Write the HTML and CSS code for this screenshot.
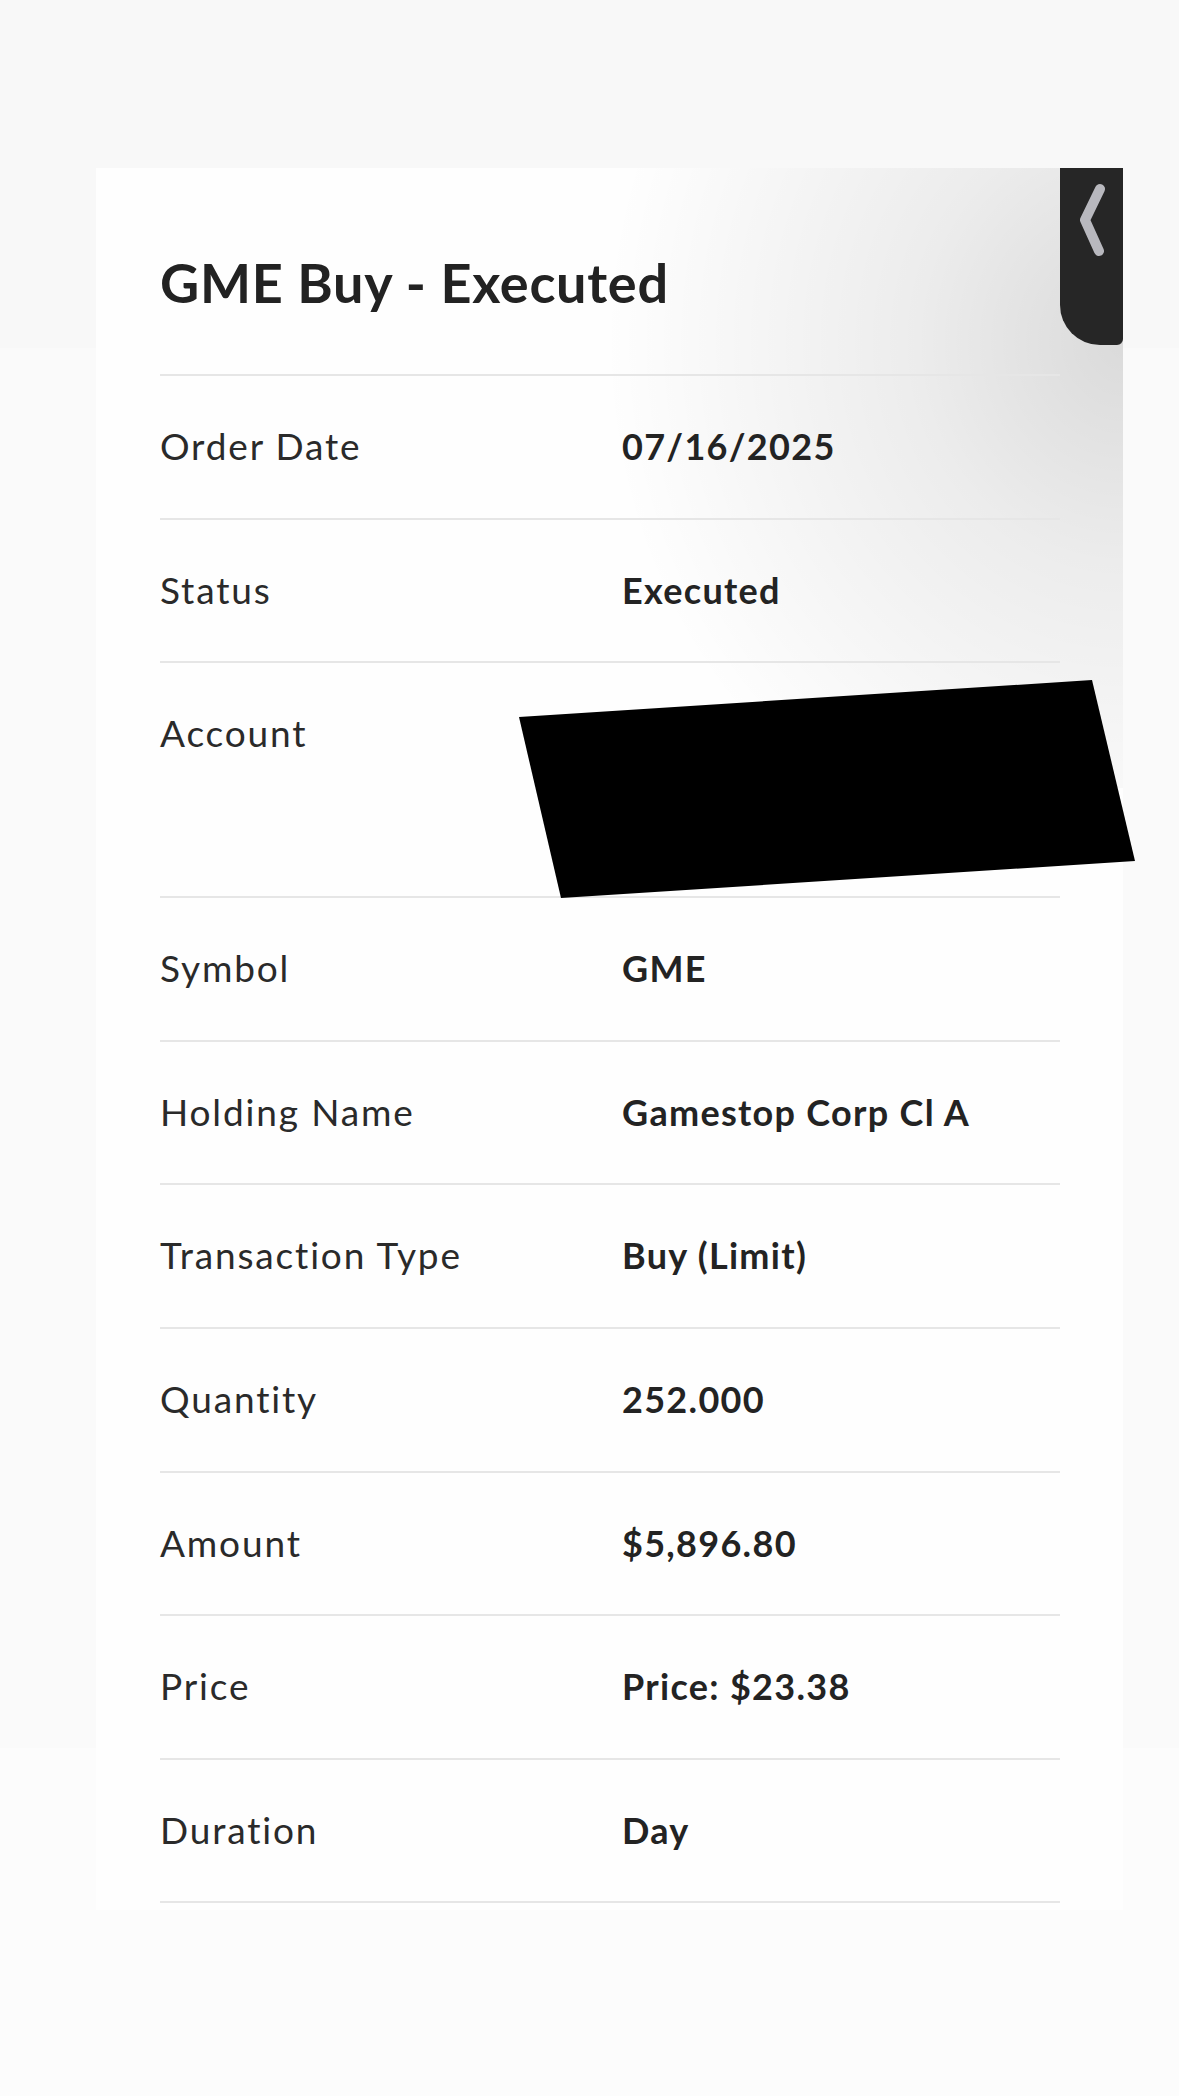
FILE: index.html
```html
<!DOCTYPE html>
<html lang="en">
<head>
<meta charset="utf-8">
<title>GME Buy - Executed</title>
<link rel="stylesheet" href="styles.css">
</head>
<body>
<div class="page">
  <div class="band band-top"></div>
  <div class="band band-mid"></div>
  <section class="card">
    <div class="shade"></div>
    <div class="tab">
      <svg class="chev" width="63" height="177" viewBox="0 0 63 177">
        <polyline points="40,21 25,52 39,83" fill="none" stroke="#b8b8be" stroke-width="10" stroke-linecap="round" stroke-linejoin="round"/>
      </svg>
    </div>
    <h1 class="title">GME Buy - Executed</h1>
    <div class="rows">
      <div class="row"><div class="label">Order Date</div><div class="value">07/16/2025</div></div>
      <div class="row"><div class="label">Status</div><div class="value">Executed</div></div>
      <div class="row row-account"><div class="label">Account</div><div class="value"></div>
        <svg class="redact" width="616" height="218" viewBox="0 0 616 218"><polygon points="0,37 573,0 616,181 42,218" fill="#000"/></svg>
      </div>
      <div class="row"><div class="label">Symbol</div><div class="value">GME</div></div>
      <div class="row"><div class="label">Holding Name</div><div class="value">Gamestop Corp Cl A</div></div>
      <div class="row"><div class="label">Transaction Type</div><div class="value">Buy (Limit)</div></div>
      <div class="row"><div class="label">Quantity</div><div class="value">252.000</div></div>
      <div class="row"><div class="label">Amount</div><div class="value">$5,896.80</div></div>
      <div class="row"><div class="label">Price</div><div class="value">Price: $23.38</div></div>
      <div class="row"><div class="label">Duration</div><div class="value">Day</div></div>
    </div>
  </section>
</div>
</body>
</html>
```
FILE: styles.css
```css
html, body {
  margin: 0;
  padding: 0;
}
body {
  background: #fcfcfc;
  font-family: "Lato", "Liberation Sans", sans-serif;
  color: #252525;
  width: 1179px;
  height: 2096px;
  overflow: hidden;
}
.page {
  position: relative;
  padding-top: 168px;
  height: 2096px;
  box-sizing: border-box;
}
.band {
  position: absolute;
  left: 0;
  right: 0;
  z-index: 0;
}
.band-top {
  top: 0;
  height: 348px;
  background: #f8f8f8;
}
.band-mid {
  top: 348px;
  height: 1400px;
  background: #fafafa;
}
.card {
  position: relative;
  z-index: 1;
  margin-left: 96px;
  width: 1027px;
  box-sizing: border-box;
  padding: 0 63px 7px 64px;
  background: #fefefe;
}
.shade {
  position: absolute;
  top: 0;
  right: 0;
  width: 560px;
  height: 620px;
  background:
    radial-gradient(ellipse 520px 560px at 100% 28%, rgba(0,0,0,0.14) 0%, rgba(0,0,0,0.07) 40%, rgba(0,0,0,0) 100%);
  pointer-events: none;
}
.tab {
  position: absolute;
  top: 0;
  right: 0;
  width: 63px;
  height: 177px;
  background: #262626;
  border-bottom-left-radius: 40px;
  border-bottom-right-radius: 6px;
  z-index: 3;
}
.chev {
  display: block;
}
.title {
  position: relative;
  margin: 0;
  padding: 85px 0 0;
  height: 208px;
  box-sizing: border-box;
  font-size: 54px;
  line-height: 60px;
  font-weight: 700;
  color: #222;
  letter-spacing: 0.7px;
  border-bottom: 2px solid #e6e6e6;
}
.rows {
  position: relative;
}
.row {
  position: relative;
  display: grid;
  grid-template-columns: 462px 1fr;
  align-items: start;
  height: 143.6px;
  box-sizing: border-box;
  padding-top: 47px;
  border-bottom: 2px solid #e6e6e6;
}
.row-account {
  height: 235px;
}
.label {
  font-size: 37px;
  line-height: 46px;
  font-weight: 400;
  color: #2a2a2a;
  letter-spacing: 1.85px;
}
.value {
  font-size: 36px;
  line-height: 46px;
  font-weight: 700;
  color: #232323;
  letter-spacing: 1.3px;
}
.redact {
  position: absolute;
  left: 359px;
  top: 17px;
  z-index: 4;
  overflow: visible;
}
```
